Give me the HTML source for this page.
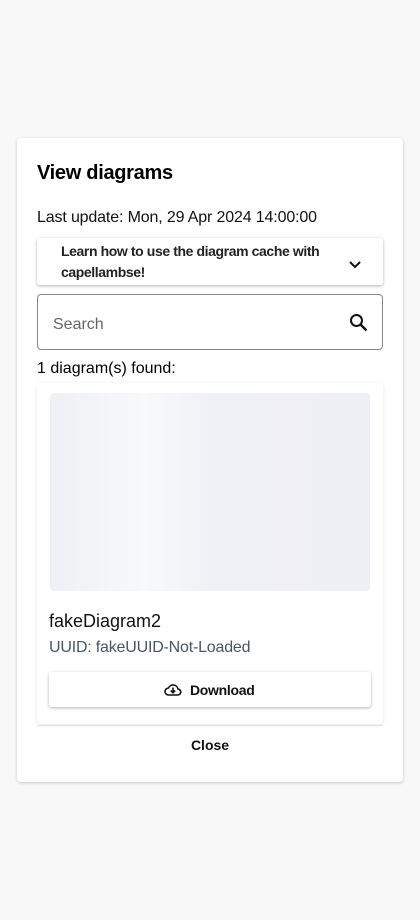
<!DOCTYPE html>
<html><head><style>
*{box-sizing:border-box;margin:0;padding:0}
body{width:420px;height:920px;background:#f8f8f8;font-family:"Liberation Sans",Roboto,sans-serif;position:relative;overflow:hidden;color:#000}
.dlg{position:absolute;left:17px;top:138px;width:386px;height:644px;background:#fff;border-radius:4px;box-shadow:0 1px 3px rgba(0,0,0,.2)}
.abs{position:absolute}
</style></head><body>
<div class="dlg">
<div class="abs" style="left:20px;top:24px;font-size:20px;font-weight:bold;letter-spacing:-0.3px">View diagrams</div>
<div class="abs" style="left:20px;top:71px;font-size:16px;color:#111;letter-spacing:-0.15px">Last update: Mon, 29 Apr 2024 14:00:00</div>
<div class="abs" style="left:20px;top:100px;width:346px;height:47px;background:#fff;border-radius:3px;box-shadow:0 1px 3px rgba(0,0,0,.3)">
<div class="abs" style="left:24px;top:3px;font-size:14px;font-weight:bold;line-height:21px;color:#222;width:290px;letter-spacing:-0.4px">Learn how to use the diagram cache with capellambse!</div>
<svg class="abs" style="left:311px;top:22px" width="14" height="10" viewBox="0 0 14 10"><path d="M2 2l5 5 5-5" fill="none" stroke="#111" stroke-width="2"/></svg>
</div>
<div class="abs" style="left:20px;top:156px;width:346px;height:56px;border:1px solid #888;border-radius:4px">
<div class="abs" style="left:15px;top:21px;font-size:16px;color:#666">Search</div>
<svg class="abs" style="left:309px;top:16px" width="24" height="24" viewBox="0 0 24 24"><circle cx="9.5" cy="9.5" r="5.5" fill="none" stroke="#111" stroke-width="2"/><path d="M13.5 13.5l6 6" stroke="#111" stroke-width="2.4"/></svg>
</div>
<div class="abs" style="left:20px;top:222px;font-size:16px">1 diagram(s) found:</div>
<div class="abs" style="left:20px;top:245px;width:346px;height:341px;background:#fff;border-radius:4px;box-shadow:0 1px 4px rgba(0,0,0,.1)">
<div class="abs" style="left:13px;top:10px;width:320px;height:198px;border-radius:4px;background:linear-gradient(90deg,#eff0f5 0%,#f8f9fb 30%,#f0f1f6 50%,#eff0f5 100%)"></div>
<div class="abs" style="left:12px;top:228px;font-size:18px;color:#111">fakeDiagram2</div>
<div class="abs" style="left:12px;top:256px;font-size:16px;color:#4a5568;letter-spacing:-0.2px">UUID: fakeUUID-Not-Loaded</div>
<div class="abs" style="left:12px;top:289px;width:322px;height:35px;background:#fff;border-radius:3px;box-shadow:0 1px 3px rgba(0,0,0,.3)">
<svg class="abs" style="left:115px;top:10px" width="18" height="16" viewBox="0 0 18 16"><path d="M4.5 13h9a3 3 0 0 0 .5-6 5 5 0 0 0-9.5-1A3.5 3.5 0 0 0 4.5 13z" fill="none" stroke="#111" stroke-width="1.6"/><path d="M9 5.5v5M6.8 8.5L9 10.7l2.2-2.2" fill="none" stroke="#111" stroke-width="1.6"/></svg>
<div class="abs" style="left:141px;top:10px;font-size:14px;font-weight:bold;color:#111;letter-spacing:-0.3px">Download</div>
</div>
</div>
<div class="abs" style="left:20px;top:587px;width:346px;height:1px;background:#e5e5e5"></div>
<div class="abs" style="left:0;width:386px;top:599px;text-align:center;font-size:14px;font-weight:bold;color:#111">Close</div>
</div>
</body></html>
